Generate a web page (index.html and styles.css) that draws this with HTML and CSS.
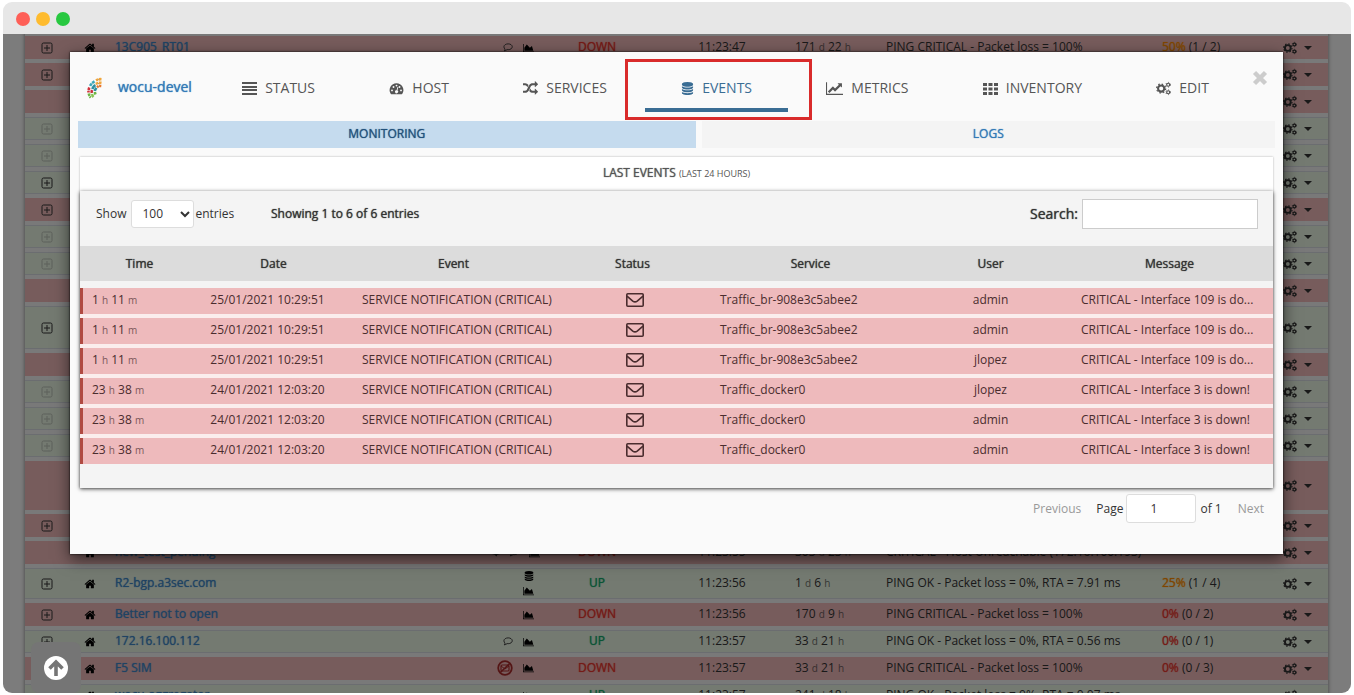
FILE: index.html
```
<!DOCTYPE html>
<html lang="en">
<head>
<meta charset="utf-8">
<title>wocu-devel events</title>
<link rel="stylesheet" href="styles.css">
</head>
<body>
<svg class="sprite" aria-hidden="true">
  <symbol id="plus" viewBox="0 0 12 12"><rect x="1" y="1" width="10" height="10" rx="1.5" fill="none" stroke="currentColor"/><path d="M6 3v6M3 6h6" stroke="currentColor" fill="none"/></symbol>
  <symbol id="home" viewBox="0 0 1792 1792"><path d="M1472 992v480q0 26-19 45t-45 19h-384v-384h-256v384h-384q-26 0-45-19t-19-45v-480q0-1 .5-3t.5-3l575-474 575 474q1 2 1 6zm223-69l-62 74q-8 9-21 11h-3q-13 0-21-7l-692-577-692 577q-12 8-24 7-13-2-21-11l-62-74q-8-10-7-23.5t11-21.5l719-599q32-26 76-26t76 26l244 204v-195q0-14 9-23t23-9h192q14 0 23 9t9 23v408l219 182q10 8 11 21.5t-7 23.5z"/></symbol>
  <symbol id="area" viewBox="0 0 2048 1792"><path d="M2048 1536v128h-2048v-1536h128v1408h1920zm-384-1024l256 896h-1664v-576l448-576 576 576z"/></symbol>
  <symbol id="line" viewBox="0 0 2048 1792"><path d="M2048 1536v128h-2048v-1536h128v1408h1920zm-128-1248v435q0 21-19.500 29.500t-35.500-7.500l-121-121-633 633q-10 10-23 10t-23-10l-233-233-416 416-192-192 585-585q10-10 23-10t23 10l233 233 464-464-121-121q-16-16-7.500-35.500t29.500-19.500h435q14 0 23 9t9 23z"/></symbol>
  <symbol id="database" viewBox="0 0 1792 1792"><path d="M896 768q237 0 443-43t325-127v170q0 69-103 128t-280 93.500-385 34.500-385-34.500-280-93.500-103-128v-170q119 84 325 127t443 43zm0 768q237 0 443-43t325-127v170q0 69-103 128t-280 93.500-385 34.500-385-34.500-280-93.500-103-128v-170q119 84 325 127t443 43zm0-384q237 0 443-43t325-127v170q0 69-103 128t-280 93.500-385 34.500-385-34.500-280-93.500-103-128v-170q119 84 325 127t443 43zm0-1152q208 0 385 34.500t280 93.500 103 128v128q0 69-103 128t-280 93.500-385 34.500-385-34.500-280-93.500-103-128v-128q0-69 103-128t280-93.500 385-34.500z"/></symbol>
  <symbol id="random" viewBox="0 0 1792 1792"><path d="M666 481q-60 92-137 273-22-45-37-72.500t-40.500-63.500-51-56.500-63-35-81.500-14.500h-224q-14 0-23-9t-9-23v-192q0-14 9-23t23-9h224q250 0 410 225zm1126 799q0 14-9 23l-320 320q-9 9-23 9-13 0-22.500-9.500t-9.500-22.500v-192q-32 0-85 .5t-81 1-73-1-71-5-64-10.500-63-18.500-58-28.500-59-40-55-53.500-56-69.500q59-93 136-273 22 45 37 72.500t40.500 63.500 51 56.500 63 35 81.500 14.500h256v-192q0-14 9-23t23-9q12 0 24 10l319 319q9 9 9 23zm0-896q0 14-9 23l-320 320q-9 9-23 9-13 0-22.500-9.500t-9.500-22.500v-192h-256q-48 0-87 15t-69 45-51 61.500-45 77.500q-32 62-78 171-29 66-49.500 111t-54 105-64 100-74 83-90 68.500-106.500 42-128 16.500h-224q-14 0-23-9t-9-23v-192q0-14 9-23t23-9h224q48 0 87-15t69-45 51-61.500 45-77.500q32-62 78-171 29-66 49.500-111t54-105 64-100 74-83 90-68.500 106.500-42 128-16.500h256v-192q0-14 9-23t23-9q12 0 24 10l319 319q9 9 9 23z"/></symbol>
  <symbol id="lines" viewBox="0 0 15 15"><path d="M0 1h15v2H0zM0 5h15v2H0zM0 8h15v2H0zM0 12h15v2H0z"/></symbol>
  <symbol id="grid" viewBox="0 0 15 15"><path d="M0 2h4v3H0zM5.500 2h4v3h-4zM11 2h4v3h-4zM0 6.500h4v3H0zM5.500 6.500h4v3h-4zM11 6.500h4v3h-4zM0 11h4v3H0zM5.500 11h4v3h-4zM11 11h4v3h-4z"/></symbol>
  <symbol id="gauge" viewBox="0 0 16 16"><path fill-rule="evenodd" d="M8 2.500a7.300 7.300 0 0 0-6.200 11.200q.2.300.6.300h11.200q.4 0 .6-.3A7.300 7.300 0 0 0 8 2.500zM3.200 9a1 1 0 1 1 0 2 1 1 0 0 1 0-2zM4.800 5.400a1 1 0 1 1 0 2 1 1 0 0 1 0-2zM8 3.900a1 1 0 1 1 0 2 1 1 0 0 1 0-2zM11.200 5.400a1 1 0 1 1 0 2 1 1 0 0 1 0-2zM12.800 9a1 1 0 1 1 0 2 1 1 0 0 1 0-2zM9 6.400l.9.300-.9 3.500a1.600 1.600 0 1 1-.9-.3z"/></symbol>
  <symbol id="gears" viewBox="0 0 16 16"><g fill="none" stroke="currentColor"><circle cx="5.500" cy="8" r="3.300" stroke-width="2.200"/><circle cx="5.500" cy="8" r="4.800" stroke-width="1.300" stroke-dasharray="1.700 2.070"/><circle cx="13" cy="4" r="1.600" stroke-width="1.300"/><circle cx="13" cy="4" r="2.500" stroke-width=".9" stroke-dasharray="1.100 1.510"/><circle cx="13" cy="12" r="1.600" stroke-width="1.300"/><circle cx="13" cy="12" r="2.500" stroke-width=".9" stroke-dasharray="1.100 1.510"/></g></symbol>
  <symbol id="caret" viewBox="0 0 8 4"><path d="M0 0h8L4 4z"/></symbol>
  <symbol id="comment" viewBox="0 0 11 11"><path d="M5.700 1.500c2.500 0 4.500 1.400 4.500 3.200s-2 3.200-4.500 3.200l-1.200-.1C3.700 8.600 2.600 9 1.300 9.200c.6-.6.900-1.200 1-1.900C1.500 6.700 1 5.800 1 4.700c0-1.800 2.100-3.200 4.700-3.200z" fill="none" stroke="currentColor"/></symbol>
  <symbol id="mail" viewBox="0 0 18 14"><g fill="none" stroke="currentColor" stroke-width="1.600" stroke-linejoin="round"><rect x=".8" y=".8" width="16.400" height="12.400" rx="1"/><path d="M1 3.200l5.800 4.900q2.200 1.500 4.400 0L17 3.200"/></g></symbol>
  <symbol id="nomail" viewBox="0 0 16 16"><g fill="none" stroke="currentColor"><circle cx="8" cy="8" r="6.800" stroke-width="1.800"/><rect x="4" y="5" width="8" height="6" rx="1" stroke-width="1.200"/><path d="M4 6l4 3 4-3"/><path d="M3.300 12.500l9.400-9" stroke-width="1.600"/></g></symbol>
  <symbol id="bell" viewBox="0 0 11 11"><path d="M0 7q3-1 3-4 2-2 5 0 0 3 3 4l-4 1-1 2-2-2z"/></symbol>
  <symbol id="up" viewBox="0 0 24 24"><circle cx="12" cy="12" r="12" fill="#fff"/><path d="M12 20V7M5.500 12.500L12 6l6.500 6.500" fill="none" stroke="#757575" stroke-width="3.600"/></symbol>
</svg>

<div class="window">
  <div class="titlebar"><span class="dot dot-red"></span><span class="dot dot-amber"></span><span class="dot dot-green"></span></div>
  <div class="page">
    <table class="hosts">
      <colgroup><col class="h-plus"><col class="h-type"><col class="h-name"><col class="h-icons"><col class="h-status"><col class="h-time"><col class="h-dur"><col><col class="h-pct"><col class="h-act"></colgroup>
      <tbody>
      <tr class="down"><td><svg class="plus"><use href="#plus"/></svg></td><td><svg class="home"><use href="#home"/></svg></td><td><a href="#">13C905_RT01</a></td><td><svg class="comment"><use href="#comment"/></svg><svg class="area"><use href="#area"/></svg></td><td><b class="s-down">DOWN</b></td><td>11:23:47</td><td>171 <small>d</small> 22 <small>h</small></td><td>PING CRITICAL - Packet loss = 100%</td><td><b class="p-warn">50%</b> (1 / 2)</td><td><svg class="gears"><use href="#gears"/></svg><svg class="caret"><use href="#caret"/></svg></td></tr>
      <tr class="down"><td><svg class="plus"><use href="#plus"/></svg></td><td colspan="8"></td><td><svg class="gears"><use href="#gears"/></svg><svg class="caret"><use href="#caret"/></svg></td></tr>
      <tr class="down none"><td></td><td colspan="8"></td><td><svg class="gears"><use href="#gears"/></svg><svg class="caret"><use href="#caret"/></svg></td></tr>
      <tr class="ok off"><td><svg class="plus"><use href="#plus"/></svg></td><td colspan="8"></td><td><svg class="gears"><use href="#gears"/></svg><svg class="caret"><use href="#caret"/></svg></td></tr>
      <tr class="ok off"><td><svg class="plus"><use href="#plus"/></svg></td><td colspan="8"></td><td><svg class="gears"><use href="#gears"/></svg><svg class="caret"><use href="#caret"/></svg></td></tr>
      <tr class="ok"><td><svg class="plus"><use href="#plus"/></svg></td><td colspan="8"></td><td><svg class="gears"><use href="#gears"/></svg><svg class="caret"><use href="#caret"/></svg></td></tr>
      <tr class="down"><td><svg class="plus"><use href="#plus"/></svg></td><td colspan="8"></td><td><svg class="gears"><use href="#gears"/></svg><svg class="caret"><use href="#caret"/></svg></td></tr>
      <tr class="ok off"><td><svg class="plus"><use href="#plus"/></svg></td><td colspan="8"></td><td><svg class="gears"><use href="#gears"/></svg><svg class="caret"><use href="#caret"/></svg></td></tr>
      <tr class="ok off"><td><svg class="plus"><use href="#plus"/></svg></td><td colspan="8"></td><td><svg class="gears"><use href="#gears"/></svg><svg class="caret"><use href="#caret"/></svg></td></tr>
      <tr class="down none"><td></td><td colspan="8"></td><td><svg class="gears"><use href="#gears"/></svg><svg class="caret"><use href="#caret"/></svg></td></tr>
      <tr class="ok tall"><td><svg class="plus"><use href="#plus"/></svg></td><td colspan="8"></td><td><svg class="gears"><use href="#gears"/></svg><svg class="caret"><use href="#caret"/></svg></td></tr>
      <tr class="down none"><td></td><td colspan="8"></td><td><svg class="gears"><use href="#gears"/></svg><svg class="caret"><use href="#caret"/></svg></td></tr>
      <tr class="ok off"><td><svg class="plus"><use href="#plus"/></svg></td><td colspan="8"></td><td><svg class="gears"><use href="#gears"/></svg><svg class="caret"><use href="#caret"/></svg></td></tr>
      <tr class="ok off"><td><svg class="plus"><use href="#plus"/></svg></td><td colspan="8"></td><td><svg class="gears"><use href="#gears"/></svg><svg class="caret"><use href="#caret"/></svg></td></tr>
      <tr class="ok off"><td><svg class="plus"><use href="#plus"/></svg></td><td colspan="8"></td><td><svg class="gears"><use href="#gears"/></svg><svg class="caret"><use href="#caret"/></svg></td></tr>
      <tr class="down none taller"><td></td><td colspan="8"></td><td><svg class="gears"><use href="#gears"/></svg><svg class="caret"><use href="#caret"/></svg></td></tr>
      <tr class="down"><td><svg class="plus"><use href="#plus"/></svg></td><td colspan="8"></td><td><svg class="gears"><use href="#gears"/></svg><svg class="caret"><use href="#caret"/></svg></td></tr>
      <tr class="down none"><td></td><td><svg class="home"><use href="#home"/></svg></td><td><a href="#">new_test_pending</a></td><td><svg class="comment"><use href="#bell"/></svg><svg class="comment"><use href="#comment"/></svg><svg class="area"><use href="#area"/></svg></td><td><b class="s-down">DOWN</b></td><td>11:23:55</td><td>303 <small>d</small> 23 <small>h</small></td><td>CRITICAL - Host Unreachable (172.16.100.193)</td><td>-</td><td><svg class="gears"><use href="#gears"/></svg><svg class="caret"><use href="#caret"/></svg></td></tr>
      <tr class="ok mid"><td><svg class="plus"><use href="#plus"/></svg></td><td><svg class="home"><use href="#home"/></svg></td><td><a href="#">R2-bgp.a3sec.com</a></td><td><div class="stack"><svg class="db"><use href="#database"/></svg><svg class="area"><use href="#area"/></svg></div></td><td><b class="s-up">UP</b></td><td>11:23:56</td><td>1 <small>d</small> 6 <small>h</small></td><td>PING OK - Packet loss = 0%, RTA = 7.91 ms</td><td><b class="p-warn">25%</b> (1 / 4)</td><td><svg class="gears"><use href="#gears"/></svg><svg class="caret"><use href="#caret"/></svg></td></tr>
      <tr class="down"><td><svg class="plus"><use href="#plus"/></svg></td><td><svg class="home"><use href="#home"/></svg></td><td><a href="#">Better not to open</a></td><td><svg class="area"><use href="#area"/></svg></td><td><b class="s-down">DOWN</b></td><td>11:23:56</td><td>170 <small>d</small> 9 <small>h</small></td><td>PING CRITICAL - Packet loss = 100%</td><td><b class="s-down">0%</b> (0 / 2)</td><td><svg class="gears"><use href="#gears"/></svg><svg class="caret"><use href="#caret"/></svg></td></tr>
      <tr class="ok"><td><svg class="plus"><use href="#plus"/></svg></td><td><svg class="home"><use href="#home"/></svg></td><td><a href="#">172.16.100.112</a></td><td><svg class="comment"><use href="#comment"/></svg><svg class="area"><use href="#area"/></svg></td><td><b class="s-up">UP</b></td><td>11:23:57</td><td>33 <small>d</small> 21 <small>h</small></td><td>PING OK - Packet loss = 0%, RTA = 0.56 ms</td><td><b class="s-down">0%</b> (0 / 1)</td><td><svg class="gears"><use href="#gears"/></svg><svg class="caret"><use href="#caret"/></svg></td></tr>
      <tr class="down none"><td></td><td><svg class="home"><use href="#home"/></svg></td><td><a href="#">F5 SIM</a></td><td><svg class="nomail"><use href="#nomail"/></svg><svg class="area"><use href="#area"/></svg></td><td><b class="s-down">DOWN</b></td><td>11:23:57</td><td>33 <small>d</small> 21 <small>h</small></td><td>PING CRITICAL - Packet loss = 100%</td><td><b class="s-down">0%</b> (0 / 3)</td><td><svg class="gears"><use href="#gears"/></svg><svg class="caret"><use href="#caret"/></svg></td></tr>
      <tr class="ok off"><td></td><td><svg class="home"><use href="#home"/></svg></td><td><a href="#">wocu-aggregator</a></td><td><svg class="area"><use href="#area"/></svg></td><td><b class="s-up">UP</b></td><td>11:23:57</td><td>241 <small>d</small> 18 <small>h</small></td><td>PING OK - Packet loss = 0%, RTA = 0.07 ms</td><td></td><td><svg class="gears"><use href="#gears"/></svg><svg class="caret"><use href="#caret"/></svg></td></tr>
      </tbody>
    </table>
    <div class="backdrop"></div>

    <section class="modal" role="dialog" aria-label="wocu-devel">
      <header class="modal-head">
        <div class="brand">
          <svg class="logo" viewBox="0 0 18 22" fill="none" stroke-width="2.600"><path d="M15.500 2.200q-3-.2-5.500 1.200" stroke="#f0a63c" stroke-dasharray="2.600 .7"/><path d="M15.500 5.800q-3.500-.4-6.500 1.600" stroke="#f0a63c" stroke-dasharray="2.600 .7"/><path d="M8.500 4.300Q5.500 6 4 9" stroke="#3aa9bb" stroke-dasharray="2.800 .7"/><path d="M15.300 9q-2.500-.3-4.300 1.200" stroke="#e8762c" stroke-dasharray="2 .7"/><path d="M9.200 8Q7 10 6.300 12" stroke="#2d8fa0"/><path d="M10.500 10.800q-1.500 1.600-1.700 3.200" stroke="#2d8fa0"/><path d="M3.300 10.500q-1 2.500-.8 5" stroke="#d1333c" stroke-dasharray="2.600 .7"/><path d="M6 13q-.5 1.500-.2 3" stroke="#c9303f"/><path d="M2.800 16.500q.5 2.500 2 4" stroke="#6cb544" stroke-dasharray="2.400 .7"/><path d="M6 17q.5 2 1.500 3" stroke="#8cc152"/><path d="M8.900 15q.1 1.300.6 2.500" stroke="#6cb544"/></svg>
          <a class="brand-name strong" href="#">wocu-devel</a>
        </div>
        <nav class="tabs">
          <a class="tab" href="#"><svg><use href="#lines"/></svg>STATUS</a>
          <a class="tab" href="#"><svg><use href="#gauge"/></svg>HOST</a>
          <a class="tab" href="#"><svg><use href="#random"/></svg>SERVICES</a>
          <a class="tab active" href="#"><svg class="narrow"><use href="#database"/></svg>EVENTS</a>
          <a class="tab" href="#"><svg class="wide"><use href="#line"/></svg>METRICS</a>
          <a class="tab" href="#"><svg><use href="#grid"/></svg>INVENTORY</a>
          <a class="tab" href="#"><svg><use href="#gears"/></svg>EDIT</a>
        </nav>
        <button class="close" type="button" aria-label="Close"><svg viewBox="0 0 16 16"><path d="M2.500 2.500l11 11M13.500 2.500l-11 11" stroke="#ccc" stroke-width="4.400"/></svg></button>
      </header>
      <div class="subtabs">
        <a class="subtab strong current" href="#">MONITORING</a>
        <a class="subtab strong" href="#">LOGS</a>
      </div>
      <div class="panel">
        <h2 class="panel-title"><span class="strong">LAST EVENTS</span> <small>(LAST 24 HOURS)</small></h2>
        <div class="panel-body">
          <div class="controls">
            <label class="length">Show <select><option>100</option></select><span>entries</span></label>
            <strong class="info strong">Showing 1 to 6 of 6 entries</strong>
            <label class="search strong">Search: <input type="text"></label>
          </div>
          <table class="events">
            <colgroup><col class="e-time"><col class="e-date"><col class="e-event"><col class="e-status"><col class="e-service"><col class="e-user"><col></colgroup>
            <thead><tr class="strong"><th>Time</th><th>Date</th><th>Event</th><th>Status</th><th>Service</th><th>User</th><th>Message</th></tr></thead>
            <tbody>
            <tr><td>1 <small>h</small> 11 <small>m</small></td><td>25/01/2021 10:29:51</td><td>SERVICE NOTIFICATION (CRITICAL)</td><td><svg class="mail"><use href="#mail"/></svg></td><td>Traffic_br-908e3c5abee2</td><td>admin</td><td>CRITICAL - Interface 109 is do...</td></tr>
            <tr><td>1 <small>h</small> 11 <small>m</small></td><td>25/01/2021 10:29:51</td><td>SERVICE NOTIFICATION (CRITICAL)</td><td><svg class="mail"><use href="#mail"/></svg></td><td>Traffic_br-908e3c5abee2</td><td>admin</td><td>CRITICAL - Interface 109 is do...</td></tr>
            <tr><td>1 <small>h</small> 11 <small>m</small></td><td>25/01/2021 10:29:51</td><td>SERVICE NOTIFICATION (CRITICAL)</td><td><svg class="mail"><use href="#mail"/></svg></td><td>Traffic_br-908e3c5abee2</td><td>jlopez</td><td>CRITICAL - Interface 109 is do...</td></tr>
            <tr><td>23 <small>h</small> 38 <small>m</small></td><td>24/01/2021 12:03:20</td><td>SERVICE NOTIFICATION (CRITICAL)</td><td><svg class="mail"><use href="#mail"/></svg></td><td>Traffic_docker0</td><td>jlopez</td><td>CRITICAL - Interface 3 is down!</td></tr>
            <tr><td>23 <small>h</small> 38 <small>m</small></td><td>24/01/2021 12:03:20</td><td>SERVICE NOTIFICATION (CRITICAL)</td><td><svg class="mail"><use href="#mail"/></svg></td><td>Traffic_docker0</td><td>admin</td><td>CRITICAL - Interface 3 is down!</td></tr>
            <tr><td>23 <small>h</small> 38 <small>m</small></td><td>24/01/2021 12:03:20</td><td>SERVICE NOTIFICATION (CRITICAL)</td><td><svg class="mail"><use href="#mail"/></svg></td><td>Traffic_docker0</td><td>admin</td><td>CRITICAL - Interface 3 is down!</td></tr>
            </tbody>
          </table>
        </div>
      </div>
      <footer class="pager">
        <button class="step" type="button">Previous</button>
        <label class="pageno">Page <input type="text" value="1"></label>
        <span class="total">of 1</span>
        <button class="step" type="button">Next</button>
      </footer>
    </section>
    <button class="to-top" type="button" aria-label="Back to top"><svg><use href="#up"/></svg></button>
  </div>
</div>
</body>
</html>
```
FILE: styles.css
```
* { box-sizing: border-box; }
body { margin: 0; background: #fff; color: #333; font: 12px/16px "Open Sans", "Noto Sans", sans-serif; }
a { color: #337ab7; text-decoration: none; }
button, input, select { font: inherit; color: inherit; }
svg { fill: currentColor; }
.sprite { position: absolute; width: 0; height: 0; }
.strong, .hosts a, .hosts b { font-weight: 400; text-shadow: 0 0 1px currentColor; }

.window { display: flex; flex-direction: column; height: calc(100vh - 4px); margin: 2px 3px; border-radius: 9px; overflow: hidden; }
.titlebar { display: flex; align-items: center; gap: 6px; flex: none; height: 32px; padding: 2px 13px 0; background: #e7e7e7; }
.dot { width: 14px; height: 14px; border-radius: 50%; }
.dot-red { background: #fe5f57; }
.dot-amber { background: #febb2e; }
.dot-green { background: #28c840; }
.page { position: relative; flex: 1; overflow: hidden; background: #f9f9f9; }

.hosts { width: calc(100% - 45px); margin: -2px 23px 0 22px; table-layout: fixed; border-spacing: 0 4px; background: #f2f2f2; box-shadow: 0 0 4px rgba(0, 0, 0, .5); }
.h-plus { width: 44px; }
.h-type { width: 42px; }
.h-name { width: 368px; }
.h-icons { width: 62px; }
.h-status { width: 112px; }
.h-time { width: 138px; }
.h-dur { width: 91px; }
.h-pct { width: 121px; }
.h-act { width: 49px; }
.hosts td { height: 23px; padding: 0 4px 1px; white-space: nowrap; }
.hosts small, .events small { font-size: 10px; opacity: .7; }
.hosts .tall td { height: 43px; }
.hosts .taller td { height: 49px; }
.hosts .mid td { height: 31px; }
.hosts td:nth-child(1), .hosts td:nth-child(2), .hosts td:nth-child(5), .hosts td:nth-child(6) { text-align: center; }
.hosts td:nth-child(4) { padding-right: 7px; text-align: right; }
.hosts td:last-child { text-align: left; }
.hosts a { color: #3f86c6; }
.hosts svg { vertical-align: middle; }
.hosts .plus { width: 12px; height: 12px; }
.off .plus { opacity: .25; }
.down td { background: #efb9b9; }
.ok td { background: #e9f4e3; box-shadow: inset 0 1px #d6dbe0, inset 0 -1px #d6dbe0; }
.home { width: 12px; height: 12px; color: #000; }
.area { width: 11px; height: 10px; margin-left: 10px; color: #000; }
.comment { width: 10px; height: 11px; margin-left: 8px; }
.nomail { width: 16px; height: 16px; color: #a82a2a; }
.db { width: 10px; height: 10px; color: #000; }
.stack { display: flex; flex-direction: column; align-items: flex-end; gap: 5px; }
.gears { width: 14px; height: 14px; }
.caret { width: 8px; height: 4px; margin-left: 7px; }
.s-down { color: #e8362e; }
.s-up { color: #14a86c; }
.p-warn { color: #ff8c00; }

.backdrop { position: absolute; inset: 0; background: rgba(0, 0, 0, .5); }
.modal { position: absolute; top: 18px; left: 67px; right: 68px; padding-bottom: 31px; background: #fafafa; box-shadow: 0 5px 15px rgba(0, 0, 0, .6), 0 0 2px #000; }
.modal-head { display: flex; align-items: center; padding: 12px 15px 9px 16px; }
.brand { display: flex; align-items: center; gap: 14px; width: 120px; }
.logo { width: 18px; height: 22px; }
.brand-name { padding-bottom: 2px; font-size: 14px; }
.tabs { display: flex; flex: 1; gap: 2px; margin-right: 7px; }
.tab { position: relative; display: flex; flex: 1 1 auto; align-items: center; justify-content: center; gap: 8px; height: 48px; padding-top: 4px; border-bottom: 4px solid transparent; color: #555; font-size: 14px; }
.tab svg { width: 15px; height: 15px; }
.tab .narrow { width: 13px; }
.tab .wide { width: 17px; }
.tab.active { color: #3a6d94; border-bottom-color: #3a6d94; }
.tab.active::after { content: ""; position: absolute; inset: -5px -24px -12px -20px; border: 3px solid #d92b2b; }
.close { display: flex; align-self: flex-start; margin-top: 6px; padding: 0; border: 0; background: none; }
.close svg { width: 16px; height: 16px; }
.subtabs { display: grid; grid-template-columns: 14fr 13fr; gap: 6px; padding: 0 8px; }
.subtab { height: 27px; background: #f4f4f4; line-height: 25px; text-align: center; }
.subtab.current { background: #c5dbee; color: #23527c; }

.panel { margin: 9px 10px 0; box-shadow: 0 0 2px rgba(0, 0, 0, .3); }
.panel-title { margin: 0; padding: 8px 0 9px; background: #fff; color: #555; font-size: 12px; line-height: 16px; font-weight: 400; text-align: center; }
.panel-title small { font-size: 9px; }
.panel-body { padding-bottom: 20px; background: #f4f4f4; box-shadow: 0 1px 4px rgba(0, 0, 0, .7); }
.controls { display: flex; align-items: center; height: 55px; padding: 0 15px 10px 16px; }
.length { display: flex; align-items: center; width: 175px; white-space: nowrap; }
.length select { width: 63px; height: 28px; margin: 0 1px 0 5px; padding: 0 0 0 6px; border: 1px solid #ddd; border-radius: 3px; background: #fff; }
.info { flex: 1; }
.search { display: flex; align-items: center; gap: 4px; font-size: 14px; }
.search input { width: 176px; height: 30px; padding: 0 6px; border: 1px solid #ccc; background: #fff; }

.events { width: 100%; table-layout: fixed; border-spacing: 0; }
.e-time { width: 105px; }
.e-date { width: 177px; }
.e-event { width: 183px; }
.e-status { width: 175px; }
.e-service { width: 181px; }
.e-user { width: 179px; }
.events th { height: 35px; padding: 0; background: #dcdcdc; font-weight: 400; }
.events th:first-child { padding-left: 14px; }
.events th:last-child { padding-right: 14px; }
.events tbody::before { content: ""; display: table-row; height: 7px; }
.events td { height: 30px; padding: 0 0 2px; border-bottom: 4px solid #fbeded; background: #eebabc; color: #4a2c2e; white-space: nowrap; }
.events td:first-child { padding-left: 12px; box-shadow: inset 3px 0 #b04a42; }
.events td:nth-child(2) { padding-right: 12px; text-align: center; }
.events td:nth-child(4) { padding-left: 4px; text-align: center; }
.events td:nth-child(6) { text-align: center; }
.events td:last-child { padding-left: 1px; }
.events tr:last-child td { border-bottom-color: #f4f4f4; }
.mail { display: block; width: 18px; height: 14px; margin: 0 auto; }

.pager { display: flex; align-items: center; justify-content: flex-end; padding: 6px 19px 0; }
.step { padding: 0; border: 0; background: none; color: #999; }
.pageno { display: flex; align-items: center; gap: 3px; margin-left: 15px; }
.pageno input { width: 70px; height: 29px; padding: 0 15px 0 0; border: 1px solid #ddd; border-radius: 3px; background: #fff; text-align: center; }
.total { margin: 0 16px 0 4px; }
.to-top { position: absolute; left: 28px; bottom: 0; width: 50px; height: 51px; padding: 0; border: 0; border-radius: 8px; background: #757575; }
.to-top svg { width: 24px; height: 24px; vertical-align: middle; }
```
